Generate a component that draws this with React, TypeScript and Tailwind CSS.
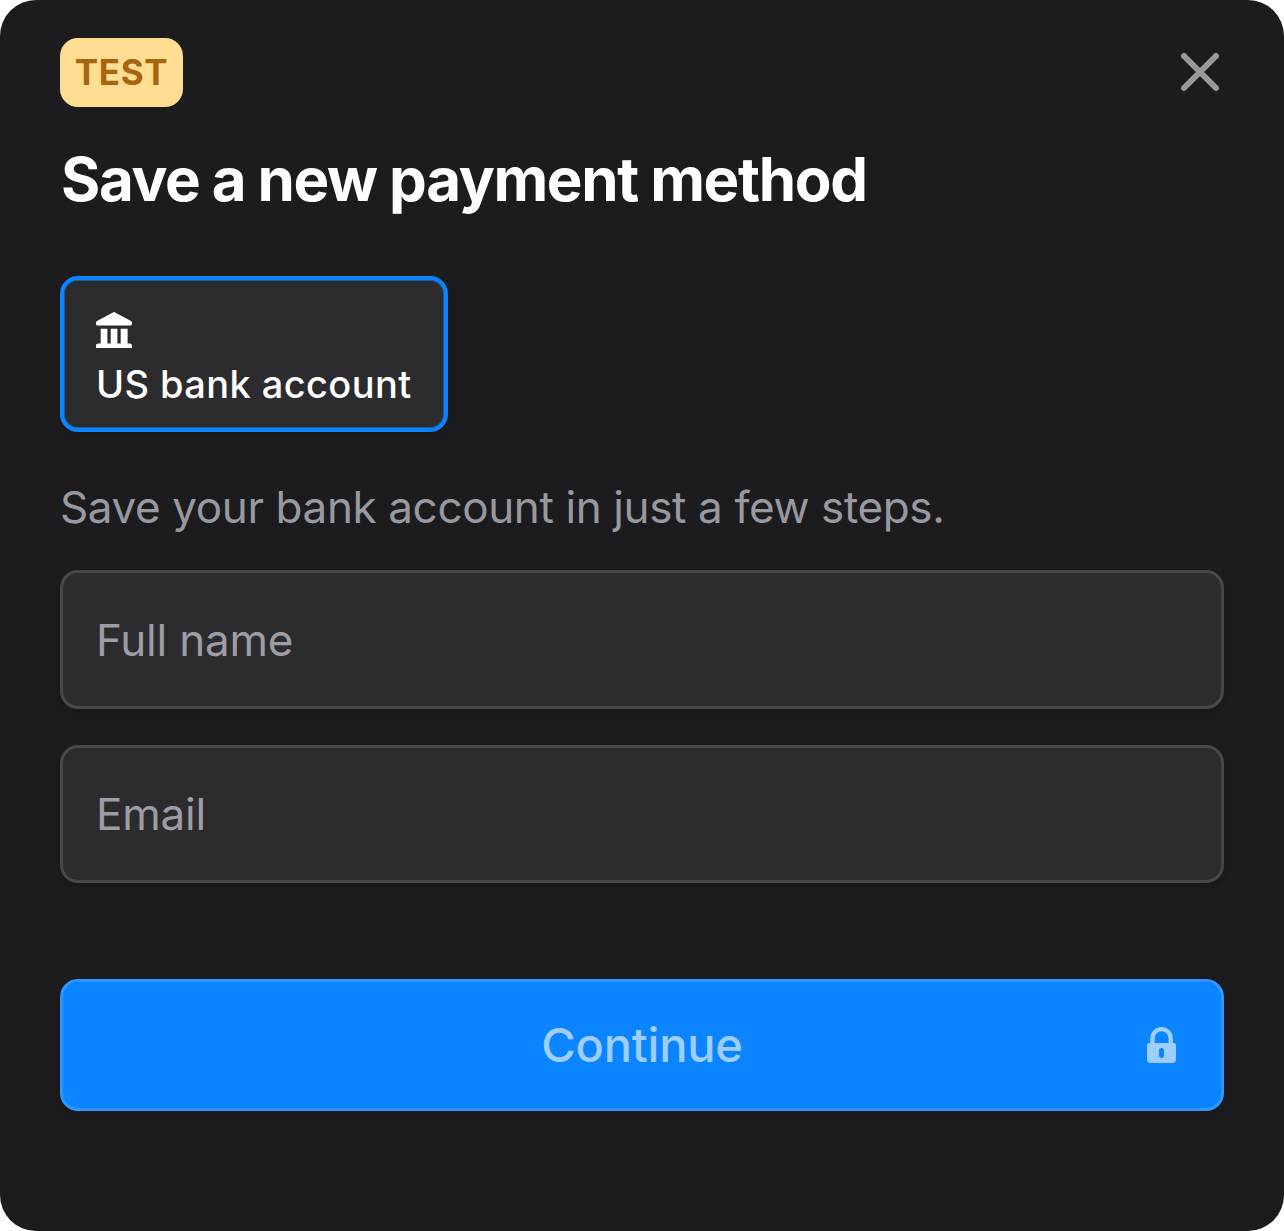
function CloseIcon() {
  return (
    <svg width="42" height="42" viewBox="0 0 42 42" fill="none" stroke="#98989f" strokeWidth="6" strokeLinecap="round">
      <path d="M5 5 37 37M37 5 5 37" />
    </svg>
  );
}

function BankIcon() {
  return (
    <svg width="36" height="36" viewBox="0 0 36 36" fill="white">
      <path d="M16.9.4a2.2 2.2 0 0 1 2.2 0L35 9.1a2 2 0 0 1 1 1.7v.9a1.9 1.9 0 0 1-1.9 1.9H1.9A1.9 1.9 0 0 1 0 11.7v-.9a2 2 0 0 1 1-1.7z" />
      <path d="M4.7 16.7h6.7v14.7h3.3V16.7h6.7v14.7h3.3V16.7h6.9v14.7h2.2A2.2 2.2 0 0 1 36 33.6V36H0v-2.4a2.2 2.2 0 0 1 2.2-2.2h2.5z" />
    </svg>
  );
}

function LockIcon() {
  return (
    <svg width="29" height="36" viewBox="0 0 29 36">
      <path d="M5.5 16v-4.8a9.1 9.1 0 0 1 18.2 0V16" fill="none" stroke="#9dceff" strokeWidth="4.3" />
      <path
        fill="#9dceff"
        fillRule="evenodd"
        d="M2 16h25a2 2 0 0 1 2 2v14a4 4 0 0 1-4 4H4a4 4 0 0 1-4-4V18a2 2 0 0 1 2-2zm12.500 5a2.500 2.500 0 0 0-2.500 2.500v5a2.500 2.500 0 0 0 5 0v-5a2.500 2.500 0 0 0-2.500-2.500z"
      />
    </svg>
  );
}

function Field({ label }: { label: string }) {
  return (
    <input
      aria-label={label}
      placeholder={label}
      className="h-[138.5px] w-full rounded-[18px] border-[3px] border-[#48484a] bg-[#2c2c2e] pt-px pl-[33px] text-[44px] tracking-[-0.2px] shadow-md outline-none placeholder:text-[#9d9da5]"
    />
  );
}

export default function App() {
  return (
    <div className="bg-white">
      <main className="flex h-[1231px] w-[1284px] flex-col rounded-[36px] bg-[#1c1c1e] px-[60px] pt-[38px] font-['Inter',sans-serif] text-white">
        <header className="flex h-[69px] items-start justify-between">
          <span className="flex h-[69px] w-[123px] items-center justify-center rounded-[18px] bg-[#ffdd93] pb-px text-[35px] font-bold tracking-[0.6px] text-[#a76510]">
            TEST
          </span>
          <button aria-label="Close" className="mt-[13px] mr-[3px]">
            <CloseIcon />
          </button>
        </header>
        <h1 className="mt-[36px] ml-px h-[73px] text-[60px] leading-[72px] font-bold tracking-[-1.35px] whitespace-nowrap [word-spacing:-0.5px]">
          Save a new payment method
        </h1>
        <button className="mt-[60px] flex h-[156px] w-[388px] flex-col items-start rounded-[18px] border-4 border-[#0a84ff] bg-[#2c2c2e] px-[32px] pt-[32px] text-left shadow-[inset_0_0_0_1px_#1b5b9f,0_3px_6px_#00000020]">
          <BankIcon />
          <span className="mt-[12px] text-[38px] leading-[48px] font-medium tracking-[0.4px] whitespace-nowrap">
            US bank account
          </span>
        </button>
        <p className="mt-[48px] h-[54px] text-[44px] leading-[54px] tracking-[-0.38px] whitespace-nowrap text-[#98989f]">
          Save your bank account in just a few steps.
        </p>
        <div className="mt-[36px] flex flex-col gap-[36px]">
          <Field label="Full name" />
          <Field label="Email" />
        </div>
        <button className="mt-[96px] grid h-[132px] grid-cols-[1fr_auto_1fr] items-center rounded-[18px] border-[3px] border-[#2f95ff] bg-[#0a84ff] shadow-md">
          <span className="col-start-2 pt-px text-[47px] font-medium tracking-[-0.2px] text-[#9dceff]">Continue</span>
          <span className="mr-[45px] justify-self-end">
            <LockIcon />
          </span>
        </button>
      </main>
    </div>
  );
}
